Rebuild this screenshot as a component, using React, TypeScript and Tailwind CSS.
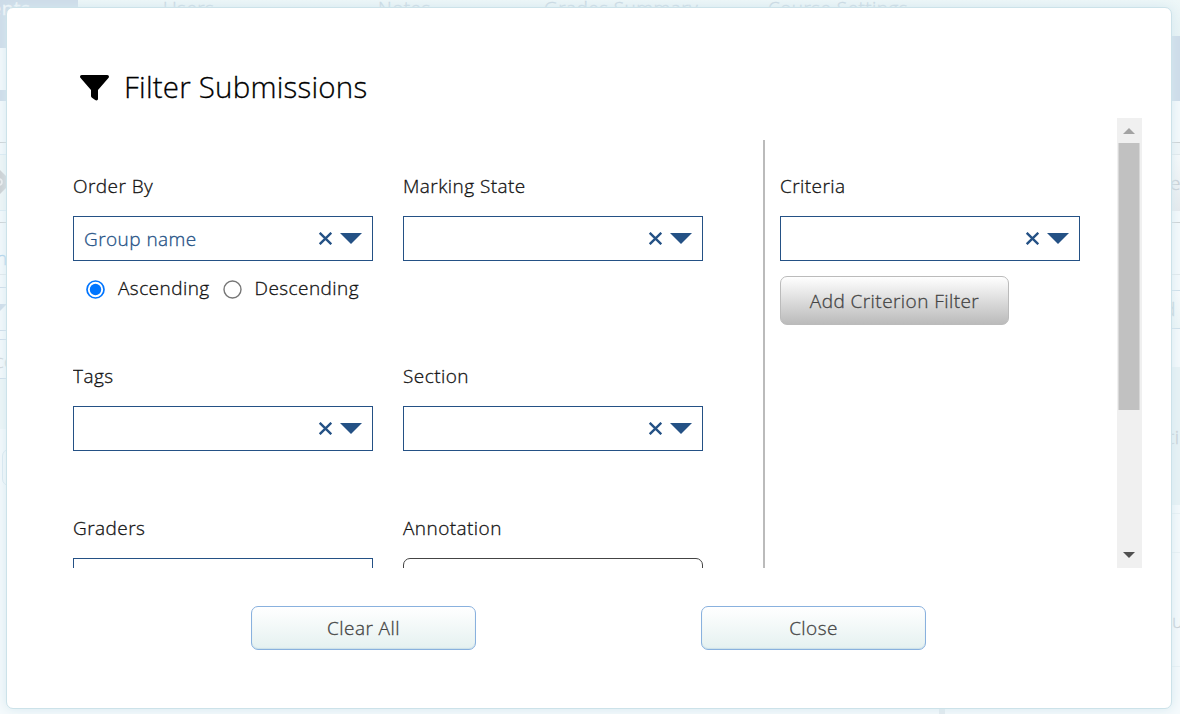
import React from "react";

function Dropdown({ value = "" }: { value?: string }) {
  return (
    <div className="flex h-[45px] w-[300px] shrink-0 items-center border border-[#245185] pr-[10px] pl-[10px]">
      <span className="flex-1 pt-px leading-[26px] text-[#245185]">{value}</span>
      <svg className="mr-[8px] h-[13px] w-[14px]" viewBox="0 0 14 13">
        <path d="M1.7 0.8 L13.3 12.2 M13.3 0.8 L1.7 12.2" stroke="#245185" strokeWidth="2.4" fill="none" />
      </svg>
      <svg className="h-[11px] w-[22px]" viewBox="0 0 22 11">
        <path d="M0 0H22L11 11Z" fill="#245185" />
      </svg>
    </div>
  );
}

function Field({ label, value, children }: { label: string; value?: string; children?: React.ReactNode }) {
  return (
    <div className="w-[300px]">
      <div className="mb-[17px] h-[26px] leading-[26px]">{label}</div>
      {children ?? <Dropdown value={value} />}
    </div>
  );
}

function Radio({ label, checked = false }: { label: string; checked?: boolean }) {
  return (
    <label className="flex items-start">
      <svg className="mt-[4px] mr-[13px] h-[19px] w-[19px]" viewBox="0 0 19 19">
        <circle cx="9.5" cy="9.5" r="8.5" fill="#fff" stroke={checked ? "#0075ff" : "#767676"} strokeWidth={checked ? 1.7 : 1.4} />
        {checked && <circle cx="9.5" cy="9.5" r="5.7" fill="#0075ff" />}
      </svg>
      <span className="-mt-px leading-[26px]">{label}</span>
    </label>
  );
}

function FooterButton({ children }: { children: React.ReactNode }) {
  return (
    <button className="h-[44px] w-[225px] rounded-[7px] border border-[#89b1de] bg-linear-to-b from-white to-[#e5f1f0] text-[#444] shadow-[inset_0_-1px_1px_#cbe0e8]">
      {children}
    </button>
  );
}

function NavItem({ className, children }: { className: string; children: string }) {
  return <span className={`${className} shrink-0 whitespace-nowrap`}>{children}</span>;
}

function Backdrop() {
  return (
    <div className="flex h-full flex-col overflow-hidden bg-[#f5fafc] text-[#c6d5e0]">
      <div className="flex h-[36px] shrink-0 bg-linear-to-b from-[#eef7f8] to-[#e8f3f5] leading-[16px]">
        <div className="h-[48px] w-[78px] shrink-0 overflow-hidden bg-[#cddbe8] text-[#f2f7fa]">
          <span className="-ml-[87px] block font-normal whitespace-nowrap">Assignments</span>
        </div>
        <NavItem className="ml-[85px] w-[215px]">Users</NavItem>
        <NavItem className="w-[166px]">Notes</NavItem>
        <NavItem className="w-[224px]">Grades Summary</NavItem>
        <NavItem className="">Course Settings</NavItem>
      </div>
      <div className="flex h-[673px] shrink-0 justify-between">
        <div className="w-[20px] overflow-hidden">
          <div className="h-[12px] bg-[#cddbe8]" />
          <div className="h-[42px]" />
          <div className="h-[11px] bg-[#cddbe8]" />
          <div className="h-[42px] border-b border-[#cbd0d2]" />
          <div className="h-[12px] border-b border-[#dcebf3]" />
          <div className="h-[56px] border-b border-[#dcebf3] bg-[#f0f7f7] pt-[15px]">
            <svg className="-ml-[18px] h-[24px] w-[25px]" viewBox="0 0 25 24">
              <path d="M7 0H18L25 7V17L18 24H7L0 17V7Z" fill="#cbced0" />
              <circle cx="17" cy="12" r="3" fill="none" stroke="#eee" strokeWidth="1.6" />
            </svg>
          </div>
          <div className="h-[12px] border-b border-[#cbd0d2]" />
          <div className="h-[52px] border-b border-[#e1e8eb] pt-[23px] leading-[24px] text-[#a6cfea]"><span className="-ml-[4px]">n</span></div>
          <div className="h-[13px] border-b border-[#cddbe8]" />
          <div className="h-[43px] border-b border-[#cddbe8] pt-[16px]">
            <svg className="-ml-[15px] h-[11px] w-[22px]" viewBox="0 0 22 11"><path d="M0 0H22L11 11Z" fill="#cddbe8" /></svg>
          </div>
          <div className="h-[9px] border-b border-[#cddbe8]" />
          <div className="h-[39px] border-b border-[#cddbe8] leading-[42px] text-[#ced4d7]"><span className="-ml-[16px]">ace</span></div>
          <div className="h-[50px] bg-[#edf6f7]" />
          <div className="h-[20px]" />
          <div className="ml-[2px] h-[37px] w-[40px] rounded-[7px] border border-[#d8e7f0]" />
        </div>
        <div className="w-[13px] overflow-hidden">
          <div className="h-[65px] bg-[#cddbe8]" />
          <div className="h-[42px] border-b border-[#cbd0d2]" />
          <div className="h-[12px] border-b border-[#e1e8eb] bg-[#f0f6f8]" />
          <div className="h-[56px] bg-linear-to-b from-[#f7fafb] to-[#e6eaed] pl-[3px] leading-[57px] text-[#c6cdd2]">e</div>
          <div className="h-[12px] border-b border-[#cbd0d2]" />
          <div className="h-[52px] border-b border-[#e1e8eb]" />
          <div className="h-[16px] border-b border-[#cddee9]" />
          <div className="h-[38px] border-b border-[#cddee9] bg-linear-to-b from-[#f8fbfc] to-[#edf6f7] leading-[36px] text-[#c0cdd2]"><span className="-ml-[3px]">d</span></div>
          <div className="h-[38px]" />
          <div className="h-[138px] bg-[#e7f2f5] leading-[140px] text-[#c6cdd2]"><span className="ml-[1px]">ti</span></div>
          <div className="h-[9px] border-b border-[#e8f1f4]" />
          <div className="h-[39px] border-b border-[#e8f1f4]" />
          <div className="h-[114px] border-b border-[#e8f1f4] pl-[5px] leading-[136px] text-[#c6cdd2]">u</div>
        </div>
      </div>
      <div className="h-[5px] shrink-0 pl-[939px]"><div className="h-full w-[6px] bg-[#e1e9ed]" /></div>
    </div>
  );
}

export default function App() {
  return (
    <div className="relative h-[714px] w-[1180px] overflow-hidden font-['Open_Sans',sans-serif] text-[19px] font-light tracking-[0.44px] text-[#111] [-webkit-text-stroke:0.3px]">
      <Backdrop />
      <main className="absolute top-[7px] left-[6px] flex h-[702px] w-[1166px] flex-col rounded-[7px] border border-[#cce2e9] bg-white pt-[56px] pl-[66px] shadow-[0_0_12px_#d5e8ef]">
        <header className="flex h-[48px] shrink-0 items-center text-[29.5px] tracking-[0.2px] text-black">
          <svg className="mr-[15px] ml-[7px] h-[26px] w-[29px]" viewBox="0 0 29 26">
            <path d="M1.7 0H27.3C28.8 0 29.5 1.8 28.4 3L18 15V23.8C18 25.3 16.5 26 15.2 25.1L12 22.7C11.4 22.3 11 21.7 11 21V15L.6 3C-.5 1.8.2 0 1.7 0Z" fill="#000" />
          </svg>
          <h1 className="-mt-[3px] leading-[40px]">Filter Submissions</h1>
        </header>
        <div className="mt-[6px] flex h-[450px] w-[1069px] shrink-0 overflow-hidden">
          <div className="flex min-w-0 flex-1 pt-[22px]">
            <div className="grid h-max w-[690px] grid-cols-[300px_300px] grid-rows-[190px_152px_100px] gap-x-[30px] pt-[33px]">
              <div>
                <Field label="Order By" value="Group name" />
                <div className="mt-[15px] ml-[13px] flex gap-[13px]">
                  <Radio label="Ascending" checked />
                  <Radio label="Descending" />
                </div>
              </div>
              <Field label="Marking State" />
              <Field label="Tags" />
              <Field label="Section" />
              <Field label="Graders" />
              <Field label="Annotation">
                <div className="h-[45px] w-[300px] rounded-[7px] border border-[#444]" />
              </Field>
            </div>
            <div className="flex-1 border-l-2 border-[#bbb] pt-[33px] pl-[15px]">
              <Field label="Criteria" />
              <button className="mt-[15px] h-[49px] w-[229px] rounded-[7px] border border-[#bbb] bg-linear-to-b from-white to-[#bbb] pt-px text-[#444]">Add Criterion Filter</button>
            </div>
          </div>
          <div className="flex w-[25px] shrink-0 flex-col items-center bg-[#f0f0f0]">
            <svg className="h-[25px] w-[25px] shrink-0" viewBox="0 0 25 25"><path d="M6 16H18L12 10Z" fill="#a3a3a3" /></svg>
            <div className="mr-px h-[267px] w-[22px] shrink-0 border-x border-[#d8d8d8] bg-[#c1c1c1]" />
            <svg className="mt-auto h-[25px] w-[25px] shrink-0" viewBox="0 0 25 25"><path d="M6 9H18L12 15Z" fill="#505050" /></svg>
          </div>
        </div>
        <footer className="mt-[38px] flex gap-[225px] pl-[178px]">
          <FooterButton>Clear All</FooterButton>
          <FooterButton>Close</FooterButton>
        </footer>
      </main>
    </div>
  );
}
